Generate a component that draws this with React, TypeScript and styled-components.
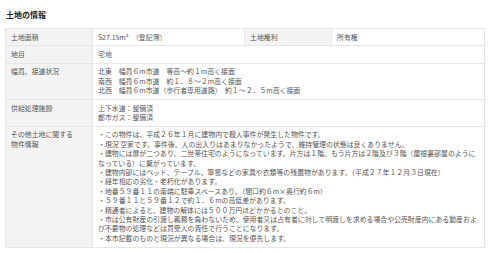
import React from 'react';
import styled, { createGlobalStyle } from 'styled-components';

const GlobalStyle = createGlobalStyle`
  html, body {
    margin: 0;
    padding: 0;
    background: #fff;
  }
  body {
    font-family: 'Noto Sans CJK JP', 'Noto Sans', sans-serif;
    color: #555;
  }
`;

const Section = styled.section`
  padding: 9px 6px 0 5px;
`;

const Title = styled.h2`
  margin: 0 0 8px 1px;
  font-size: 8px;
  line-height: 11px;
  font-weight: 700;
  color: #222;
`;

const Table = styled.table`
  width: 479px;
  border-collapse: collapse;
  table-layout: fixed;
  border: 1px solid #e6e6e6;
  font-size: 6.9px;
  line-height: 9.4px;
`;

const Th = styled.th`
  padding: 3.5px 5px;
  border: 1px solid #e6e6e6;
  background: #f3f3f3;
  color: #555;
  font-weight: 400;
  text-align: left;
  vertical-align: top;
`;

const Td = styled.td`
  padding: 3.5px 4px 3.5px 5px;
  border: 1px solid #e6e6e6;
  background: #fff;
  color: #555;
  text-align: left;
  vertical-align: top;
`;

const Lines = styled.ul`
  margin: 0;
  padding: 0;
  list-style: none;
`;

const Line = styled.li`
  margin: 0;
`;

interface IRow {
  label: React.ReactNode;
  lines: string[];
}

const rows: IRow[] = [
  { label: '地目', lines: ['宅地'] },
  {
    label: '幅員、接道状況',
    lines: [
      '北東　幅員６m市道　等高～約１m高く接面',
      '南西　幅員６m市道　約１．８～２m高く接面',
      '北西　幅員６m市道（歩行者専用道路）　約１～２．５m高く接面',
    ],
  },
  {
    label: '供給処理施設',
    lines: ['上下水道：整備済', '都市ガス：整備済'],
  },
  {
    label: (
      <>
        その他土地に関する
        <br />
        物件情報
      </>
    ),
    lines: [
      '・この物件は、平成２６年１月に建物内で殺人事件が発生した物件です。',
      '・現況 空家です。事件後、人の出入りはあまりなかったようで、維持管理の状態は良くありません。',
      '・建物には扉が二つあり、二世帯住宅のようになっています。片方は１階、もう片方は２階及び３階（屋根裏部屋のようになっている）に繋がっています。',
      '・建物内部にはベッド、テーブル、箪笥などの家具や衣類等の残置物があります。（平成２７年１２月３日現在）',
      '・経年相応の劣化・老朽化があります。',
      '・地番５９番１１の南端に駐車スペースあり。（間口約６m×奥行約６m）',
      '・５９番１１と５９番１２で約１．６mの高低差があります。',
      '・精通者によると、建物の解体には５００万円ほどかかるとのこと。',
      '・市は公有財産の引渡し義務を負わないため、使用者又は占有者に対して明渡しを求める場合や公売財産内にある動産および不要物の処理などは買受人の責任で行うことになります。',
      '・本市記載のものと現況が異なる場合は、現況を優先します。',
    ],
  },
];

const App: React.FC = () => {
  return (
    <>
      <GlobalStyle />
      <Section>
        <Title>土地の情報</Title>
        <Table>
          <colgroup>
            <col style={{ width: 87 }} />
            <col style={{ width: 152 }} />
            <col style={{ width: 87 }} />
            <col style={{ width: 153 }} />
          </colgroup>
          <tbody>
            <tr>
              <Th>土地面積</Th>
              <Td>S27.15m²　（登記簿）</Td>
              <Th>土地権利</Th>
              <Td>所有権</Td>
            </tr>
            {rows.map((row, i) => (
              <tr key={i}>
                <Th>{row.label}</Th>
                <Td colSpan={3}>
                  <Lines>
                    {row.lines.map((line, j) => (
                      <Line key={j}>{line}</Line>
                    ))}
                  </Lines>
                </Td>
              </tr>
            ))}
          </tbody>
        </Table>
      </Section>
    </>
  );
};

export default App;
